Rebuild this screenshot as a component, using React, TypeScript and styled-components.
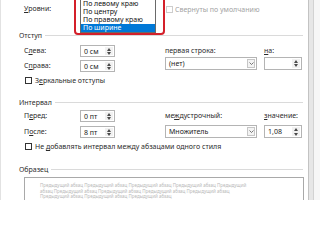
import React from "react";
import styled, { createGlobalStyle } from "styled-components";

const GlobalStyle = createGlobalStyle`
  html, body { margin: 0; padding: 0; background: #ffffff; }
  body {
    font-family: "Noto Sans", "Open Sans", "DejaVu Sans", sans-serif;
    font-size: 7px;
    color: #2b2b2b;
  }
  #root { width: 320px; height: 200px; overflow: hidden; }
  * { box-sizing: border-box; }
`;

const Page = styled.div`
  display: flex;
  width: 320px;
  height: 200px;
  overflow: hidden;
  background: #f6f6f6;
`;

const Dialog = styled.div`
  width: 309px;
  height: 200px;
  flex: none;
  background: #ffffff;
  border-left: 1px solid #e2e2e2;
  border-right: 1px solid #c3c3c3;
  display: flex;
  flex-direction: column;
  line-height: 1;
  overflow: hidden;
`;

const Edge = styled.div`
  width: 5px;
  height: 200px;
  flex: none;
  background: #e6e6e6;
  border-right: 1px solid #d2d2d2;
`;

const TopRow = styled.div`
  display: flex;
  align-items: center;
  height: 18px;
  padding-left: 23px;
`;

const FieldLabel = styled.span<{ $w?: number }>`
  flex: none;
  width: ${(p) => (p.$w ? `${p.$w}px` : "auto")};
  white-space: nowrap;
  line-height: 10px;
`;

const Key = styled.span`
  text-decoration: underline;
  text-underline-offset: 1px;
  text-decoration-thickness: 0.5px;
`;

const ListAnchor = styled.div`
  position: relative;
  width: 85px;
  height: 18px;
  flex: none;
  align-self: flex-start;
`;

const RedFrame = styled.div`
  position: absolute;
  left: -6px;
  top: -4px;
  width: 91px;
  height: 39px;
  border: 2px solid #d4202a;
  border-radius: 4px;
  padding: 1px 7px 0 4px;
  background: #ffffff;
  z-index: 2;
`;

const ListBox = styled.div`
  border: 1px solid #6a6a6a;
  background: #ffffff;
`;

const ListItem = styled.div<{ $selected?: boolean }>`
  height: 8px;
  line-height: 8px;
  padding-left: 2px;
  white-space: nowrap;
  color: ${(p) => (p.$selected ? "#ffffff" : "#111111")};
  background: ${(p) => (p.$selected ? "#0078d7" : "transparent")};
`;

const CheckGroup = styled.div<{ $ml?: number }>`
  display: flex;
  align-items: center;
  gap: 2px;
  margin-left: ${(p) => p.$ml ?? 0}px;
`;

const CheckBox = styled.span<{ $disabled?: boolean }>`
  width: 7px;
  height: 7px;
  flex: none;
  border: 1px solid ${(p) => (p.$disabled ? "#cdcdcd" : "#333333")};
  background: #ffffff;
`;

const CheckText = styled.span<{ $disabled?: boolean }>`
  white-space: nowrap;
  color: ${(p) => (p.$disabled ? "#a3a3a3" : "#2b2b2b")};
`;

const SectionHeader = styled.div<{ $mt: number }>`
  display: flex;
  align-items: center;
  height: 10px;
  margin-top: ${(p) => p.$mt}px;
  padding: 0 5px 0 18px;
`;

const HeaderText = styled.span`
  flex: none;
  white-space: nowrap;
`;

const HeaderRule = styled.div`
  flex: 1;
  height: 1px;
  background: #dadada;
  margin-left: 3px;
`;

const FieldBlock = styled.div<{ $mt: number }>`
  display: flex;
  align-items: flex-start;
  margin-top: ${(p) => p.$mt}px;
  padding-left: 23px;
`;

const LeftCol = styled.div<{ $gap: number }>`
  display: flex;
  flex-direction: column;
  gap: ${(p) => p.$gap}px;
  width: 91px;
  flex: none;
`;

const FieldRow = styled.div`
  display: flex;
  align-items: center;
  height: 12px;
`;

const RightCol = styled.div`
  display: flex;
  flex-direction: column;
  margin-left: 50px;
`;

const RightLabels = styled.div`
  display: flex;
  align-items: center;
  height: 12px;
`;

const Controls = styled.div<{ $mt: number }>`
  display: flex;
  gap: 7px;
  height: 13px;
  margin-top: ${(p) => p.$mt}px;
`;

const SpinBox = styled.div<{ $w: number; $h: number }>`
  display: flex;
  align-items: stretch;
  width: ${(p) => p.$w}px;
  height: ${(p) => p.$h}px;
  border: 1px solid #b4b4b4;
  background: #ffffff;
`;

const SpinValue = styled.span`
  flex: 1;
  padding-left: 3px;
  display: flex;
  align-items: center;
  white-space: nowrap;
  color: #222222;
`;

const SpinButtons = styled.div`
  width: 8px;
  display: flex;
  flex-direction: column;
  margin: 1px 1px 1px 0;
  background: #f1f1f1;
`;

const SpinArrow = styled.div`
  flex: 1;
  display: flex;
  align-items: center;
  justify-content: center;
`;

const Select = styled.div`
  display: flex;
  align-items: center;
  width: 92px;
  height: 13px;
  border: 1px solid #b4b4b4;
  padding: 0 1px 0 3px;
  background: #ffffff;
`;

const SelectText = styled.span`
  flex: 1;
  white-space: nowrap;
  color: #222222;
`;

const SelectArrow = styled.div`
  width: 8px;
  height: 9px;
  border: 1px solid #c6c6c6;
  background: #f3f3f3;
  display: flex;
  align-items: center;
  justify-content: center;
`;

const CheckRow = styled.div<{ $mt: number }>`
  display: flex;
  align-items: center;
  gap: 3px;
  height: 8px;
  margin-top: ${(p) => p.$mt}px;
  padding-left: 24px;
`;

const Preview = styled.div`
  margin: 3px 0 0 23px;
  width: 280px;
  flex: 1;
  border: 1px solid #a9a9a9;
  border-bottom: none;
  padding: 5px 0 0 15px;
`;

const PreviewText = styled.div`
  width: 214px;
  font-size: 4.5px;
  line-height: 5.5px;
  color: #b9b9b9;
`;

const Spinner: React.FC = () => (
  <SpinButtons>
    <SpinArrow>
      <svg width="4" height="3" viewBox="0 0 4 3">
        <path d="M0 3 L2 0 L4 3 Z" fill="#4a4a4a" />
      </svg>
    </SpinArrow>
    <SpinArrow>
      <svg width="4" height="3" viewBox="0 0 4 3">
        <path d="M0 0 L4 0 L2 3 Z" fill="#4a4a4a" />
      </svg>
    </SpinArrow>
  </SpinButtons>
);

const Spin: React.FC<{ value?: string; w: number; h: number }> = ({ value, w, h }) => (
  <SpinBox $w={w} $h={h}>
    <SpinValue>{value}</SpinValue>
    <Spinner />
  </SpinBox>
);

const Dropdown: React.FC<{ value: string }> = ({ value }) => (
  <Select>
    <SelectText>{value}</SelectText>
    <SelectArrow>
      <svg width="5" height="3" viewBox="0 0 5 3">
        <path d="M0.5 0.5 L2.5 2.5 L4.5 0.5" stroke="#555" strokeWidth="0.8" fill="none" />
      </svg>
    </SelectArrow>
  </Select>
);

const previewText = Array.from({ length: 12 }, () => "Предыдущий абзац").join(" ");

export default function App() {
  return (
    <>
      <GlobalStyle />
      <Page>
        <Dialog>
          <TopRow>
            <FieldLabel $w={56}>
              <Key>У</Key>ровни:
            </FieldLabel>
            <ListAnchor>
              <RedFrame>
                <ListBox>
                  <ListItem>По левому краю</ListItem>
                  <ListItem>По центру</ListItem>
                  <ListItem>По правому краю</ListItem>
                  <ListItem $selected>По ширине</ListItem>
                </ListBox>
              </RedFrame>
            </ListAnchor>
            <CheckGroup $ml={1}>
              <CheckBox $disabled />
              <CheckText $disabled>Свернуты по умолчанию</CheckText>
            </CheckGroup>
          </TopRow>

          <SectionHeader $mt={13}>
            <HeaderText>Отступ</HeaderText>
            <HeaderRule />
          </SectionHeader>

          <FieldBlock $mt={5}>
            <LeftCol $gap={3}>
              <FieldRow>
                <FieldLabel $w={56}>
                  С<Key>л</Key>ева:
                </FieldLabel>
                <Spin value="0 см" w={35} h={12} />
              </FieldRow>
              <FieldRow>
                <FieldLabel $w={56}>
                  С<Key>п</Key>рава:
                </FieldLabel>
                <Spin value="0 см" w={35} h={12} />
              </FieldRow>
            </LeftCol>
            <RightCol>
              <RightLabels>
                <FieldLabel $w={99}>первая строка:</FieldLabel>
                <FieldLabel>
                  <Key>н</Key>а:
                </FieldLabel>
              </RightLabels>
              <Controls $mt={0}>
                <Dropdown value="(нет)" />
                <Spin w={38} h={13} />
              </Controls>
            </RightCol>
          </FieldBlock>

          <CheckRow $mt={5}>
            <CheckBox />
            <CheckText>
              З<Key>е</Key>ркальные отступы
            </CheckText>
          </CheckRow>

          <SectionHeader $mt={14}>
            <HeaderText>Интервал</HeaderText>
            <HeaderRule />
          </SectionHeader>

          <FieldBlock $mt={3}>
            <LeftCol $gap={4}>
              <FieldRow>
                <FieldLabel $w={56}>
                  П<Key>е</Key>ред:
                </FieldLabel>
                <Spin value="0 пт" w={35} h={12} />
              </FieldRow>
              <FieldRow>
                <FieldLabel $w={56}>
                  П<Key>о</Key>сле:
                </FieldLabel>
                <Spin value="8 пт" w={35} h={12} />
              </FieldRow>
            </LeftCol>
            <RightCol>
              <RightLabels>
                <FieldLabel $w={99}>
                  ме<Key>ж</Key>дустрочный:
                </FieldLabel>
                <FieldLabel>
                  <Key>з</Key>начение:
                </FieldLabel>
              </RightLabels>
              <Controls $mt={3}>
                <Dropdown value="Множитель" />
                <Spin value="1,08" w={38} h={13} />
              </Controls>
            </RightCol>
          </FieldBlock>

          <CheckRow $mt={5}>
            <CheckBox />
            <CheckText>
              Не <Key>д</Key>обавлять интервал между абзацами одного стиля
            </CheckText>
          </CheckRow>

          <SectionHeader $mt={15}>
            <HeaderText>Образец</HeaderText>
            <HeaderRule />
          </SectionHeader>

          <Preview>
            <PreviewText>{previewText}</PreviewText>
          </Preview>
        </Dialog>
        <Edge />
      </Page>
    </>
  );
}
